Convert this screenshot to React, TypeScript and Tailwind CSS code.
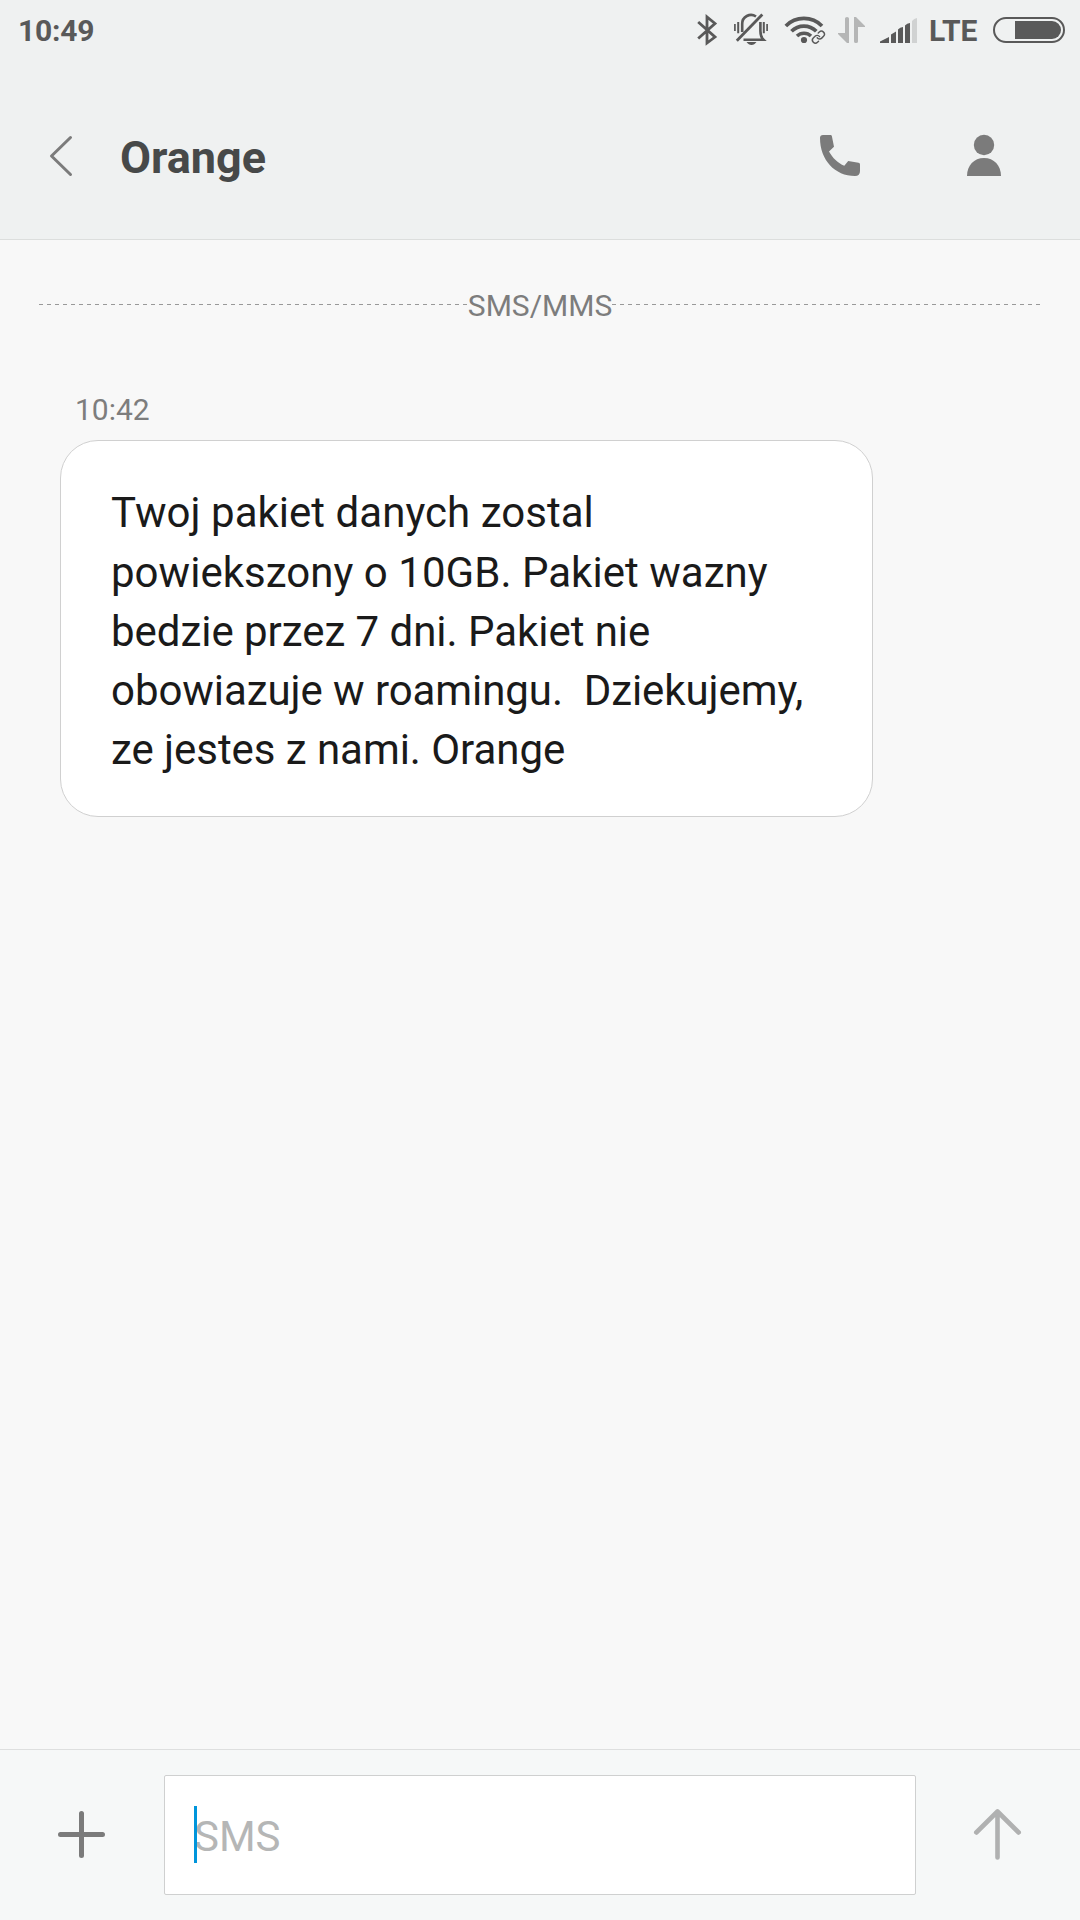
import React from "react";

function BluetoothIcon() {
  return (
    <svg width="22" height="60" viewBox="696 0 22 60" fill="none" stroke="#595959" strokeWidth="2.8">
      <path d="M698.2 22 L715 37 L707 43 V17 L715 23.5 L698.2 38.5" />
    </svg>
  );
}

function VibrateIcon() {
  return (
    <svg width="36" height="60" viewBox="733 0 36 60" fill="none" stroke="#595959">
      <path d="M742.2 32 V24 A8.8 8.8 0 0 1 756 16.5" strokeWidth="2.6" />
      <path d="M760.4 22 V31 C760.4 35 761.2 37.5 763.5 39.7 H743.5" strokeWidth="2.6" />
      <path d="M762.3 14.5 L736.8 40.8" strokeWidth="2.8" />
      <path d="M746.5 42 H756.5 C755 44 753.5 45 751.5 45 C749.5 45 748 44 746.5 42 Z" fill="#595959" stroke="none" />
      <path d="M734.9 24 V31 M767.1 24 V31" strokeWidth="1.7" />
      <path d="M738.2 22 V33.3 M763.8 22 V33.3" strokeWidth="2" />
    </svg>
  );
}

function WifiIcon() {
  return (
    <svg width="42" height="60" viewBox="784 0 42 60" fill="none" stroke="#595959">
      <path d="M785.8 26 A25.5 25.5 0 0 1 822 26" strokeWidth="3.7" />
      <path d="M791.5 31.3 A17.3 17.3 0 0 1 816.3 31.3" strokeWidth="3.7" />
      <path d="M797 36 A10 10 0 0 1 811 36" strokeWidth="3.5" />
      <circle cx="804" cy="40" r="3.1" fill="#595959" stroke="none" />
      <g strokeWidth="2.4" strokeLinecap="round" transform="translate(811.2 30) scale(0.6)">
        <path d="M10 13a5 5 0 0 0 7.54.54l3-3a5 5 0 0 0-7.07-7.07l-1.72 1.71" />
        <path d="M14 11a5 5 0 0 0-7.54-.54l-3 3a5 5 0 0 0 7.07 7.07l1.71-1.71" />
      </g>
    </svg>
  );
}

function DataIcon() {
  return (
    <svg width="29" height="60" viewBox="837 0 29 60" fill="#b5b6b6">
      <path d="M845 18.5 Q845 17 847 17 Q849 17 849 18.5 V43 H847 L838 34 V33 H845 Z" />
      <path d="M854 17 H856 L865 26 V27 H858 V41.5 Q858 43 856 43 Q854 43 854 41.5 Z" />
    </svg>
  );
}

function SignalIcon() {
  return (
    <svg width="40" height="60" viewBox="879 0 40 60" fill="#595959">
      <path d="M880 43 V41.5 L889 37 V43 Z" />
      <path d="M891 43 V34.5 L896 31.5 V43 Z" />
      <path d="M898 43 V29.5 Q900 27 903 27 V43 Z" />
      <path d="M905 43 V25.5 Q907 23 910 23 V43 Z" />
      <path d="M912 43 V21 Q914 18.5 917 18 V43 Z" fill="#d0d2d2" />
    </svg>
  );
}

function BatteryIcon() {
  return (
    <svg width="74" height="60" viewBox="992 0 74 60">
      <rect x="994" y="18" width="70" height="24" rx="12" fill="none" stroke="#595959" strokeWidth="2" />
      <path d="M1015 21 H1052 A9 9 0 0 1 1052 39 H1015 Z" fill="#595959" />
    </svg>
  );
}

function StatusBar() {
  return (
    <div className="flex h-[60px] items-center pl-[18px] pr-[14px] text-[30px] font-bold text-[#595959]">
      <span className="flex-1 tracking-[-0.2px]">10:49</span>
      <BluetoothIcon />
      <div className="w-[15px]" />
      <VibrateIcon />
      <div className="w-[15px]" />
      <WifiIcon />
      <div className="w-[11px]" />
      <DataIcon />
      <div className="w-[13px]" />
      <SignalIcon />
      <span className="w-[73px] pl-[10px]">LTE</span>
      <BatteryIcon />
    </div>
  );
}

function Header() {
  return (
    <header className="h-[240px] border-b border-[#dcdedd] bg-[#eff1f1]">
      <StatusBar />
      <div className="flex items-start pl-12 pr-[78px] pt-[72px]">
        <button className="mt-[3px]">
          <svg width="26" height="42" viewBox="48 135 26 42" fill="none" stroke="#7b7b7b" strokeWidth="3" strokeLinecap="round" strokeLinejoin="round">
            <path d="M70.5 137.5 L51.5 156 L70.5 174.5" />
          </svg>
        </button>
        <h1 className="ml-[46px] flex-1 text-[45px] font-bold leading-[52px] text-[#474949]">Orange</h1>
        <button className="mt-[2px]">
          <svg width="42" height="42" viewBox="819 134 42 42" fill="#7b7b7b">
            <path d="M823 135 H830.5 Q831.7 135 831.9 136.2 L834 146.8 L829 151.5 C832.5 158 838 163 844.3 165.8 L848.2 161 L858.5 162.8 Q860 163 860 164.5 V171 Q860 176 855 176 C835 176 820 160 820 138 Q820 135 823 135 Z" />
          </svg>
        </button>
        <button className="ml-[105px] mt-[2px]">
          <svg width="36" height="42" viewBox="966 134 36 42" fill="#7b7b7b">
            <circle cx="984" cy="145" r="10.2" />
            <path d="M967 176 C967 165.5 974 158 984 158 C994 158 1001 165.5 1001 176 Z" />
          </svg>
        </button>
      </div>
    </header>
  );
}

function DashedLine() {
  return (
    <div className="h-px flex-1 bg-[repeating-linear-gradient(90deg,#999_0_4px,transparent_4px_8px)]" />
  );
}

const lines = [
  { text: "Twoj pakiet danych zostal", className: "mb-px tracking-[0.03px]" },
  { text: "powiekszony o 10GB. Pakiet wazny", className: "tracking-[0.03px]" },
  { text: "bedzie przez 7 dni. Pakiet nie", className: "tracking-[-0.04px]" },
  { text: "obowiazuje w roamingu.  Dziekujemy,", className: "tracking-[-0.07px]" },
  { text: "ze jestes z nami. Orange", className: "tracking-[-0.05px]" },
];

function Conversation() {
  return (
    <main className="flex-1">
      <div className="flex items-center px-[39px] pt-[44px] text-[30px] leading-[37px] text-[#7d7d7d]">
        <DashedLine />
        <span className="pt-[3px]">SMS/MMS</span>
        <DashedLine />
      </div>
      <time className="ml-[75px] mt-[67px] block text-[30px] leading-[38px] text-[#7d7d7d]">10:42</time>
      <div className="ml-[60px] mt-[11px] h-[377px] w-[813px] rounded-[38px] border border-[#d0d0d0] bg-white pl-[50px] pt-[42px]">
        <div className="whitespace-pre text-[42px] leading-[59px] text-[#1a1a1a]">
          {lines.map((line) => (
            <p key={line.text} className={line.className}>
              {line.text}
            </p>
          ))}
        </div>
      </div>
    </main>
  );
}

function Composer() {
  return (
    <footer className="flex h-[171px] items-start border-t border-[#dedfdf] bg-[#f6f8f8] pt-[25px]">
      <button className="ml-[57px] mt-[35px]">
        <svg width="49" height="49" viewBox="0 0 49 49" stroke="#7b7b7b" strokeWidth="5" strokeLinecap="round">
          <path d="M3.5 24.5 H45.5 M24.5 3.5 V45.5" />
        </svg>
      </button>
      <div className="ml-[58px] flex h-[120px] w-[752px] items-center rounded-xs border border-[#cfd0d0] bg-white pl-[29px]">
        <div className="relative mb-px flex h-[57px] items-center">
          <span className="pt-[4px] text-[42px] text-[#b5b6b6]">SMS</span>
          <div className="absolute left-0 top-0 h-[57px] w-[3px] bg-[#0095db]" />
        </div>
      </div>
      <button className="ml-[56px] mt-[32px]">
        <svg width="50" height="54" viewBox="972 1807 50 54" fill="none" stroke="#b0b1b1" strokeWidth="4.6" strokeLinecap="round" strokeLinejoin="round">
          <path d="M976.3 1832.5 L997.5 1811.5 L1018.7 1832.5 M997.5 1811.5 V1857.5" />
        </svg>
      </button>
    </footer>
  );
}

export default function App() {
  return (
    <div className="flex h-[1920px] w-[1080px] flex-col overflow-hidden bg-[#f8f8f8] font-[Roboto,sans-serif]">
      <Header />
      <Conversation />
      <Composer />
    </div>
  );
}
